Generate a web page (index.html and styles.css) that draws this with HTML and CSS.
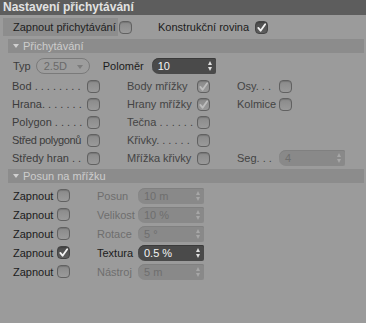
FILE: index.html
```
<!DOCTYPE html>
<html lang="cs">
<head>
<meta charset="utf-8">
<link rel="stylesheet" href="styles.css">
</head>
<body>
<div class="panel">
  <div class="title">Nastavení přichytávání</div>

  <div class="toprow">
    <div class="enable-box">Zapnout přichytávání</div>
    <span class="cb"></span>
    <span class="lbl dark kon">Konstrukční rovina</span>
    <span class="cb on"><svg viewBox="0 0 12 12"><path d="M2.5 6.5 L5 9.5 L10 2.5"/></svg></span>
  </div>

  <div class="bar"><span class="tri"></span>Přichytávání</div>

  <div class="typ-row">
    <span class="lbl">Typ</span>
    <span class="dropdown">2.5D<span class="arrow"></span></span>
    <span class="lbl dark pol">Poloměr</span>
    <span class="field active rad">10<span class="spin"></span></span>
  </div>

  <div class="snap-grid">
    <span class="lbl">Bod . . . . . . . .</span><span class="cb"></span><span></span>
    <span class="lbl mid">Body mřížky</span><span class="cb dis"><svg viewBox="0 0 12 12"><path d="M2.5 6.5 L5 9.5 L10 2.5"/></svg></span><span></span>
    <span class="lbl mid">Osy. . .</span><span class="cb"></span>

    <span class="lbl">Hrana. . . . . . .</span><span class="cb"></span><span></span>
    <span class="lbl mid">Hrany mřížky</span><span class="cb dis"><svg viewBox="0 0 12 12"><path d="M2.5 6.5 L5 9.5 L10 2.5"/></svg></span><span></span>
    <span class="lbl mid">Kolmice</span><span class="cb"></span>

    <span class="lbl">Polygon . . . . .</span><span class="cb"></span><span></span>
    <span class="lbl mid">Tečna . . . . . .</span><span class="cb"></span><span></span>
    <span></span><span></span>

    <span class="lbl tight">Střed polygonů</span><span class="cb"></span><span></span>
    <span class="lbl mid">Křivky. . . . . .</span><span class="cb"></span><span></span>
    <span></span><span></span>

    <span class="lbl">Středy hran . .</span><span class="cb"></span><span></span>
    <span class="lbl mid">Mřížka křivky</span><span class="cb"></span><span></span>
    <span class="lbl mid">Seg. . .</span><span class="field off seg">4<span class="spin"></span></span>
  </div>

  <div class="bar bar2"><span class="tri"></span>Posun na mřížku</div>

  <div class="posun-grid">
    <span class="lbl dark">Zapnout</span><span class="cb"></span><span></span>
    <span class="lbl off-l">Posun</span><span class="field off">10 m<span class="spin"></span></span>

    <span class="lbl dark">Zapnout</span><span class="cb"></span><span></span>
    <span class="lbl off-l">Velikost</span><span class="field off">10 %<span class="spin"></span></span>

    <span class="lbl dark">Zapnout</span><span class="cb"></span><span></span>
    <span class="lbl off-l">Rotace</span><span class="field off">5 °<span class="spin"></span></span>

    <span class="lbl dark">Zapnout</span><span class="cb on"><svg viewBox="0 0 12 12"><path d="M2.5 6.5 L5 9.5 L10 2.5"/></svg></span><span></span>
    <span class="lbl dark">Textura</span><span class="field active">0.5 %<span class="spin"></span></span>

    <span class="lbl dark">Zapnout</span><span class="cb"></span><span></span>
    <span class="lbl off-l">Nástroj</span><span class="field off">5 m<span class="spin"></span></span>
  </div>
</div>
</body>
</html>
```

FILE: styles.css
```
* { box-sizing: border-box; }
html, body { margin: 0; padding: 0; }
body {
  background: #9b9b9b;
  font-family: "Liberation Sans", Arial, sans-serif;
  font-size: 11px;
  color: #3c3c3c;
  width: 366px;
  height: 323px;
  overflow: hidden;
}
.title {
  height: 15px;
  background: #5d5d5d;
  color: #e2e2e2;
  font-weight: bold;
  font-size: 12px;
  line-height: 15px;
  padding-left: 3px;
}
.toprow {
  display: flex;
  align-items: center;
  height: 18px;
  margin-top: 3px;
}
.enable-box {
  margin-left: 3px;
  width: 115px;
  height: 18px;
  line-height: 18px;
  padding-left: 10px;
  background: #8d8d8d;
  color: #1e1e1e;
  white-space: nowrap;
}
.toprow .cb { margin-left: 1px; }
.kon { margin-left: 26px; margin-right: 5px; }

.lbl { white-space: nowrap; line-height: 14px; }
.tight { letter-spacing: -0.35px; }
.dark { color: #1c1c1c; }
.mid { color: #444; }
.off-l { color: #6e6e6e; }

.cb {
  display: inline-flex;
  align-items: center;
  justify-content: center;
  width: 13px;
  height: 13px;
  border: 1px solid #616161;
  border-radius: 4px;
  background: linear-gradient(#8a8a8a, #9a9a9a);
  box-shadow: inset 0 1px 1px rgba(0,0,0,0.15);
}
.cb svg { width: 11px; height: 11px; }
.cb svg path { fill: none; stroke-width: 2; stroke-linecap: round; stroke-linejoin: round; }
.cb.on { background: linear-gradient(#4c4c4c, #5e5e5e); border-color: #444; }
.cb.on svg path { stroke: #f2f2f2; }
.cb.dis svg path { stroke: #bdbdbd; }

.bar {
  margin: 3px 2px 0 8px;
  height: 14px;
  background: #8c8c8c;
  color: #cdcdcd;
  line-height: 14px;
  display: flex;
  align-items: center;
}
.tri {
  width: 0; height: 0;
  border-left: 3px solid transparent;
  border-right: 3px solid transparent;
  border-top: 4px solid #d0d0d0;
  margin: 0 4px 0 5px;
}
.bar2 { margin-top: 2px; }

.typ-row {
  display: flex;
  align-items: center;
  height: 16px;
  margin-top: 5px;
  padding-left: 13px;
}
.dropdown {
  position: relative;
  margin-left: 5px;
  width: 54px;
  height: 16px;
  border: 1px solid #7a7a7a;
  border-radius: 8px;
  padding-left: 7px;
  line-height: 14px;
  color: #6a6a6a;
  background: #9d9d9d;
}
.arrow {
  position: absolute;
  right: 6px; top: 6px;
  border-left: 3px solid transparent;
  border-right: 3px solid transparent;
  border-top: 4px solid #7c7c7c;
}
.pol { margin-left: 13px; }
.field {
  position: relative;
  width: 66px;
  height: 16px;
  border-radius: 7px 2px 2px 7px;
  padding-left: 6px;
  line-height: 16px;
  font-size: 11px;
}
.field.active { background: #4a4a4a; color: #f4f4f4; box-shadow: inset 0 1px 0 #3a3a3a; }
.field.off { background: #898989; color: #6e6e6e; box-shadow: inset 0 1px 0 #808080; }
.rad { margin-left: 8px; width: 64px; }
.spin {
  position: absolute;
  right: 3px; top: 3px;
  width: 5px; height: 10px;
}
.spin::before, .spin::after {
  content: "";
  position: absolute;
  left: 0;
  border-left: 2.5px solid transparent;
  border-right: 2.5px solid transparent;
}
.spin::before { top: 0; border-bottom: 4px solid #a7a7a7; }
.spin::after { bottom: 0; border-top: 4px solid #a7a7a7; }
.field.active .spin::before { border-bottom-color: #e0e0e0; }
.field.active .spin::after { border-top-color: #e0e0e0; }

.snap-grid {
  display: grid;
  grid-template-columns: 75px 13px 27px 70px 13px 27px 42px 66px;
  grid-auto-rows: 18px;
  align-items: center;
  margin-top: 3px;
  padding-left: 12px;
}

.posun-grid {
  display: grid;
  grid-template-columns: 44px 13px 27px 41px 66px;
  grid-auto-rows: 19px;
  align-items: center;
  margin-top: 3px;
  padding-left: 13px;
}
```
